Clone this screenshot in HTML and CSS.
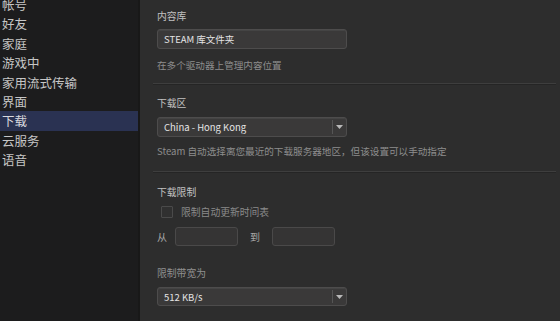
FILE: index.html
```html
<!DOCTYPE html>
<html lang="zh-CN">
<head>
<meta charset="utf-8">
<link rel="stylesheet" href="styles.css">
</head>
<body>
<div class="app">
  <nav class="sidebar">
    <div class="nav-item first">帐号</div>
    <div class="nav-item">好友</div>
    <div class="nav-item">家庭</div>
    <div class="nav-item">游戏中</div>
    <div class="nav-item">家用流式传输</div>
    <div class="nav-item">界面</div>
    <div class="nav-item active">下载</div>
    <div class="nav-item">云服务</div>
    <div class="nav-item">语音</div>
  </nav>
  <main class="main">
    <section class="section s1">
      <div class="title">内容库</div>
      <div class="field button-field">STEAM 库文件夹</div>
      <div class="help">在多个驱动器上管理内容位置</div>
    </section>
    <div class="sep sep1"></div>
    <section class="section s2">
      <div class="title">下载区</div>
      <div class="field select">
        <span class="select-value">China - Hong Kong</span>
        <span class="select-arrow"><svg width="7" height="4" viewBox="0 0 7 4"><path d="M0 0h7L3.5 4z" fill="#b9b9b9"/></svg></span>
      </div>
      <div class="help">Steam 自动选择离您最近的下载服务器地区，但该设置可以手动指定</div>
    </section>
    <div class="sep sep2"></div>
    <section class="section s3">
      <div class="title">下载限制</div>
      <div class="check-row">
        <span class="checkbox"></span>
        <span class="check-label">限制自动更新时间表</span>
      </div>
      <div class="time-row">
        <span class="time-label">从</span>
        <span class="time-input"></span>
        <span class="time-label to">到</span>
        <span class="time-input"></span>
      </div>
      <div class="title t-band">限制带宽为</div>
      <div class="field select">
        <span class="select-value">512 KB/s</span>
        <span class="select-arrow"><svg width="7" height="4" viewBox="0 0 7 4"><path d="M0 0h7L3.5 4z" fill="#b9b9b9"/></svg></span>
      </div>
    </section>
  </main>
</div>
</body>
</html>
```

FILE: styles.css
```css
* { box-sizing: border-box; }
html, body {
  margin: 0;
  padding: 0;
  width: 560px;
  height: 321px;
  overflow: hidden;
  background: #2d2d2d;
  font-family: "Noto Sans CJK SC", "Noto Sans", "Liberation Sans", sans-serif;
}
.app {
  display: flex;
  height: 321px;
}
.sidebar {
  width: 140px;
  flex: none;
  background: #1c1c1d;
  border-right: 2px solid #181818;
  padding-top: 0;
}
.nav-item {
  height: 19.4px;
  line-height: 19.4px;
  font-size: 12.5px;
  color: #c6c6c6;
  padding-left: 2px;
  white-space: nowrap;
}
.nav-item.first {
  margin-top: -5px;
}
.nav-item.active {
  background: #2a3252;
  color: #d8d8de;
}
.main {
  flex: 1;
  background: #2d2d2d;
  padding-left: 17px;
  display: flex;
  flex-direction: column;
}
.section {
  display: flex;
  flex-direction: column;
  align-items: flex-start;
}
.title {
  font-size: 9.8px;
  line-height: 14px;
  height: 14px;
  color: #c2c2c2;
}
.help {
  font-size: 9.6px;
  line-height: 14px;
  height: 14px;
  color: #8e8e8e;
  white-space: nowrap;
}
.s1 { padding-top: 9px; }
.s1 .field { margin-top: 6px; }
.s1 .help { margin-top: 9px; }
.field {
  width: 190px;
  height: 20px;
  background: #3a3939;
  border: 1px solid #4d4c4c;
  border-radius: 3px;
  box-shadow: inset 0 1px 0 #444;
  color: #e4e4e4;
  font-size: 9.5px;
  line-height: 18px;
  padding-left: 6px;
  white-space: nowrap;
}
.select {
  display: flex;
  align-items: stretch;
  padding-left: 0;
}
.select-value {
  flex: 1;
  padding-left: 6px;
}
.select-arrow {
  width: 14px;
  border-left: 1px solid #555;
  margin: 2px 0;
  display: flex;
  align-items: center;
  justify-content: center;
}
.sep {
  height: 2px;
  margin-left: -4px;
  width: 403px;
  background: linear-gradient(to bottom, #3e3e3e 0 1px, #252525 1px 2px);
}
.sep1 { margin-top: 11px; }
.s2 { padding-top: 11px; }
.s2 .field { margin-top: 7px; }
.s2 .help { margin-top: 7px; }
.sep2 { margin-top: 13px; }
.s3 { padding-top: 12px; }
.check-row {
  display: flex;
  align-items: center;
  margin-top: 6px;
  height: 14px;
}
.checkbox {
  width: 12px;
  height: 12px;
  margin-left: 4px;
  border: 1px solid #4a4a4a;
  background: #303030;
  border-radius: 1px;
}
.check-label {
  margin-left: 8px;
  font-size: 9.8px;
  line-height: 14px;
  color: #8a8a8a;
}
.time-row {
  display: flex;
  align-items: center;
  margin-top: 8px;
  height: 19px;
}
.time-label {
  font-size: 10px;
  color: #a8a8a8;
  width: 18px;
}
.time-label.to {
  width: 22px;
  margin-left: 12px;
}
.time-input {
  width: 63px;
  height: 19px;
  background: #353434;
  border: 1px solid #4a4949;
  border-radius: 3px;
}
.t-band {
  margin-top: 20px;
  color: #909090;
}
.s3 .select { margin-top: 7px; height: 19px; }
```
